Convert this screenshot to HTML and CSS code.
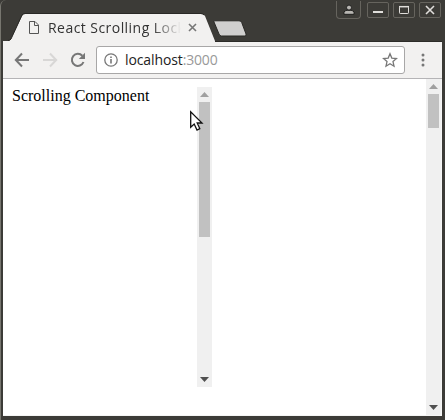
FILE: index.html
```html
<!DOCTYPE html>
<html lang="en">
<head>
<meta charset="utf-8">
<title>React Scrolling Lock</title>
<link rel="stylesheet" href="styles.css">
</head>
<body>
<div class="window">
  <header class="titlebar">
    <div class="tab">
      <svg class="tab-shape" width="206" height="29" viewBox="0 0 206 29"><path d="M0 29V28H5Q7 28 8 26L19 3Q20 1 22 1H198Q201 1 202 3L212 28V29Z" fill="#f2f1f0"/><path d="M5 27.5Q7 27.5 8 26L19 2Q20 .5 22 .5H198Q200 .5 201 2" fill="none" stroke="#292825"/></svg>
      <svg class="file-icon" width="12" height="15" viewBox="0 0 12 15"><path d="M1.5 1.5H7L10.5 5V13.5H1.5ZM6.5 1.5V5.5H10.5" fill="none" stroke="#555"/></svg>
      <span class="tab-title">React Scrolling Lock</span>
      <svg class="tab-close" width="9" height="9" viewBox="0 0 9 9"><path d="M1 1L8 8M8 1L1 8" stroke="#777" stroke-width="1.6"/></svg>
    </div>
    <svg class="new-tab" width="34" height="17" viewBox="0 0 34 17"><path d="M1.5 .8H26Q28 .8 28.7 2.5L33 14Q33.5 16 32 16H8.5Q6.5 16 6 14L1 2Q.6 .8 1.5 .8Z" fill="#d0cfce" stroke="#292825"/></svg>
    <div class="controls">
      <span class="control user"><svg width="12" height="12" viewBox="0 0 12 12"><path d="M1 10.3V8.5Q1 6.6 4 6.3H8Q11 6.6 11 8.5V10.3Z" fill="#b8b6b2" stroke="#191917" stroke-width=".9"/><circle cx="6" cy="3.6" r="2.5" fill="#b8b6b2" stroke="#191917" stroke-width=".9"/></svg></span>
      <span class="control"><svg width="12" height="12" viewBox="0 0 12 12"><path d="M1 8H11" stroke="#e0dedb" stroke-width="2"/></svg></span>
      <span class="control"><svg width="12" height="12" viewBox="0 0 12 12"><rect x="1.5" y="2.5" width="9" height="7" rx=".7" fill="none" stroke="#e0dedb"/><path d="M1 2.7H11" stroke="#e0dedb" stroke-width="1.5"/></svg></span>
      <span class="control"><svg width="12" height="12" viewBox="0 0 12 12"><path d="M2 2L10 10M10 2L2 10" stroke="#e0dedb" stroke-width="1.6"/></svg></span>
    </div>
  </header>
  <nav class="toolbar">
    <svg class="nav-icon back" width="16" height="16" viewBox="0 0 16 16"><path d="M15 8H2M8 1.5L1.8 8L8 14.5" fill="none" stroke="#777" stroke-width="2"/></svg>
    <svg class="nav-icon forward" width="16" height="16" viewBox="0 0 16 16"><path d="M1 8H14M8 1.5L14.2 8L8 14.5" fill="none" stroke="#d8d7d6" stroke-width="2"/></svg>
    <svg class="nav-icon reload" width="16" height="16" viewBox="0 0 16 16"><path d="M13.5 10A6 6 0 1 1 12.3 3.8" fill="none" stroke="#777" stroke-width="2"/><path d="M15 .8V7H8.8Z" fill="#777"/></svg>
    <div class="address">
      <svg class="info" width="14" height="14" viewBox="0 0 14 14"><circle cx="7" cy="7" r="6.2" fill="none" stroke="#777" stroke-width="1.3"/><path d="M7 6V10.5M7 3.4V5" stroke="#777" stroke-width="1.6"/></svg>
      <span class="host">localhost</span><span class="port">:3000</span>
      <svg class="star" width="16" height="16" viewBox="0 0 16 16"><path d="M8 1.8L9.8 6.1L14.5 6.5L11 9.6L12 14.2L8 11.7L4 14.2L5 9.6L1.5 6.5L6.2 6.1Z" fill="none" stroke="#777" stroke-width="1.3"/></svg>
    </div>
    <svg class="more" width="4" height="14" viewBox="0 0 4 14"><g fill="#777"><circle cx="2" cy="2" r="1.5"/><circle cx="2" cy="7" r="1.5"/><circle cx="2" cy="12" r="1.5"/></g></svg>
  </nav>
  <main class="page">
    <section class="scroll-box">
      <p class="label">Scrolling Component</p>
      <div class="scrollbar">
        <span class="arrow up"></span><span class="thumb inner-thumb"></span><span class="arrow down"></span>
      </div>
    </section>
    <div class="scrollbar">
      <span class="arrow up"></span><span class="thumb page-thumb"></span><span class="arrow down"></span>
    </div>
  </main>
</div>
<svg class="cursor" width="15" height="22" viewBox="0 0 15 22"><path d="M1.7 1.8V17.2L5.2 14L8 20L10.8 18.6L8.2 13H13Z" fill="#fff" stroke="#111" stroke-width="1.3"/></svg>
</body>
</html>
```

FILE: styles.css
```css
* { box-sizing: border-box; }
body { margin: 0; width: 445px; height: 420px; overflow: hidden; background: #3c3b37; }
svg { display: block; flex: none; }
.window {
  height: 420px;
  display: flex;
  flex-direction: column;
  padding: 0 3px 4px 2px;
  border-left: 1px solid #77766f;
  border-radius: 6px 0 0 0;
}
.titlebar { height: 42px; display: flex; align-items: flex-start; box-shadow: inset 0 -1px #2c2b28; }
.tab {
  position: relative;
  width: 211px;
  height: 29px;
  margin-top: 13px;
  padding-left: 25px;
  display: flex;
  align-items: center;
}
.tab-shape { position: absolute; left: 0; top: 0; overflow: visible; }
.file-icon, .tab-title, .tab-close { position: relative; }
.tab-title {
  width: 133px;
  margin-left: 8px;
  overflow: hidden;
  white-space: nowrap;
  font: 14px/20px "Open Sans", "Noto Sans", sans-serif;
  letter-spacing: .45px;
  color: #333;
  -webkit-mask-image: linear-gradient(to right, #000 105px, transparent 133px);
  mask-image: linear-gradient(to right, #000 105px, transparent 133px);
}
.tab-close { margin-left: 7px; }
.new-tab { margin: 20px 0 0 -1px; }
.controls { margin: 0 1px 0 auto; display: flex; gap: 4px; }
.control {
  width: 22px;
  height: 16px;
  margin-top: 2px;
  border: 1px solid #66645e;
  border-radius: 2px;
  display: flex;
  align-items: center;
  justify-content: center;
}
.user {
  width: 25px;
  height: 18px;
  margin: 1px 2px 0 0;
  border-top: 0;
  border-radius: 0 0 4px 4px;
}
.toolbar { height: 37px; flex: none; display: flex; align-items: center; background: #f2f1f0; border-bottom: 1px solid #b5b4b6; }
.back { margin-left: 11px; }
.forward { margin-left: 12px; }
.reload { margin-left: 12px; }
.address {
  width: 309px;
  height: 28px;
  margin-left: 10px;
  padding: 0 6px 0 7px;
  display: flex;
  align-items: center;
  background: #fff;
  border: 1px solid #a8a7a7;
  border-radius: 3px;
  font: 14px/20px "Open Sans", "Noto Sans", sans-serif;
}
.host { margin-left: 7px; color: #222; letter-spacing: -.1px; }
.port { color: #999; letter-spacing: -.2px; }
.star { margin-left: auto; }
.more { margin-left: 16px; }
.page { flex: 1; min-height: 0; display: flex; justify-content: space-between; background: #fff; border-bottom: 1px solid #f5f5f4; border-right: 1px solid #f5f5f4; }
.scroll-box { width: 200px; height: 300px; margin: 8px 0 0 9px; display: flex; justify-content: space-between; }
.label { margin: 0; font: 16px/18px "Liberation Serif", serif; color: #000; white-space: nowrap; }
.scrollbar { width: 15px; flex: none; display: flex; flex-direction: column; align-items: center; background: #f0f0f0; }
.arrow { width: 9px; height: 5px; }
.up { margin: 5px 0; background: #a0a0a0; clip-path: polygon(50% 0, 100% 100%, 0 100%); }
.down { margin: auto 0 5px; background: #505050; clip-path: polygon(0 0, 100% 0, 50% 100%); }
.thumb { width: 11px; background: #c1c1c1; }
.inner-thumb { height: 135px; }
.page-thumb { height: 34px; }
.cursor { position: absolute; left: 189px; top: 110px; }
```
